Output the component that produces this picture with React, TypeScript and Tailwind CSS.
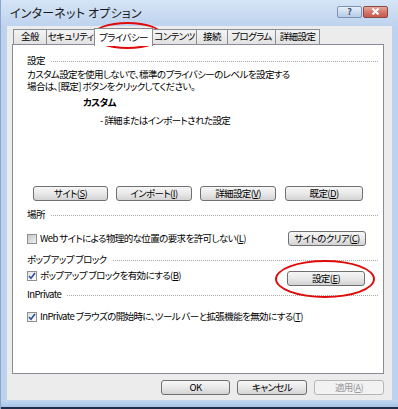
import React from 'react';

const font = "font-['Noto_Sans_CJK_JP','Liberation_Sans',sans-serif] [font-feature-settings:'palt']";
const txt = 'text-[9.5px] tracking-[-0.6px] leading-none';

function Btn({ children, w, disabled = false }: { children: React.ReactNode; w: string; disabled?: boolean }) {
  return (
    <div
      className={`${w} h-[15px] shrink-0 flex items-center justify-center rounded-[3px] border ${txt} ${
        disabled
          ? 'border-[#b4b8bb] bg-[#f2f2f2] text-[#9a9a9a]'
          : 'border-[#707070] bg-gradient-to-b from-[#f6f6f6] via-[#e9e9e9] to-[#d3d3d3] text-black'
      }`}
    >
      {children}
    </div>
  );
}

function Key({ k }: { k: string }) {
  return (
    <span>
      (<span className="underline underline-offset-1">{k}</span>)
    </span>
  );
}

function GroupHeader({ label }: { label: string }) {
  return (
    <div className={`h-[12px] flex items-center gap-[6px] ${txt}`}>
      <span>{label}</span>
      <div className="flex-1 border-t border-dotted border-[#a9a9a9]" />
    </div>
  );
}

function Checkbox({ checked }: { checked: boolean }) {
  return (
    <div
      className={`w-[10px] h-[10px] shrink-0 border border-[#8e8f8f] flex items-center justify-center ${
        checked ? 'bg-gradient-to-br from-[#e4e4e4] to-[#ffffff]' : 'bg-gradient-to-br from-[#c8c8c8] to-[#eeeeee]'
      }`}
    >
      {checked && (
        <svg width="8" height="8" viewBox="0 0 8 8">
          <path d="M1 4 L3 6.3 L7 1" stroke="#2b4fa3" strokeWidth="1.6" fill="none" />
        </svg>
      )}
    </div>
  );
}

const tabs = [
  { label: '全般', w: 'w-[34px]' },
  { label: 'セキュリティ', w: 'w-[49px]' },
  { label: 'プライバシー', w: 'w-[59px]', active: true },
  { label: 'コンテンツ', w: 'w-[45px]' },
  { label: '接続', w: 'w-[32px]' },
  { label: 'プログラム', w: 'w-[49px]' },
  { label: '詳細設定', w: 'w-[45px]' },
];

export default function App() {
  return (
    <div className={`relative w-[398px] h-[409px] overflow-hidden flex flex-col bg-[#bcd2ee] border-l border-[#8aa6cc] ${font} text-black`}>
      {/* Title bar */}
      <div className="h-[26px] shrink-0 flex items-center pl-[9px] pr-[10px] bg-gradient-to-b from-[#d6e5f6] to-[#bed3ee]">
        <span className="text-[12px] leading-none text-[#1a1a1a] tracking-[0.2px]">インターネット オプション</span>
        <div className="ml-auto flex items-center gap-[1px] -mt-[3px]">
          <div className="w-[25px] h-[12px] rounded-[2px] border border-[#7d93b6] bg-gradient-to-b from-[#e8f0fa] via-[#cddcf0] to-[#b5cbe8] flex items-center justify-center text-[9px] font-bold leading-none text-[#3a4a64]">
            ?
          </div>
          <div className="w-[25px] h-[12px] rounded-[2px] border border-[#8a4a44] bg-gradient-to-b from-[#e8a89b] via-[#d3776a] to-[#c85a4c] flex items-center justify-center">
            <svg width="9" height="7" viewBox="0 0 9 7">
              <path d="M1.5 0.5 L7.5 6.5 M7.5 0.5 L1.5 6.5" stroke="#ffffff" strokeWidth="2" />
            </svg>
          </div>
        </div>
      </div>

      {/* Client area */}
      <div className="mx-[6px] h-[374px] shrink-0 bg-[#ececec] pt-[2px] pl-[5px] pr-[8px] flex flex-col">
        {/* Tabs */}
        <div className="h-[16px] flex items-end pl-[1px] relative z-10">
          {tabs.map((t) =>
            t.active ? (
              <div
                key={t.label}
                className={`${t.w} h-[18px] -mb-[2px] -mr-px shrink-0 bg-white border border-b-0 border-[#898c95] flex items-center justify-center ${txt}`}
              >
                {t.label}
              </div>
            ) : (
              <div
                key={t.label}
                className={`${t.w} h-[15px] -mr-px shrink-0 border border-b-0 border-[#898c95] bg-gradient-to-b from-[#f4f4f4] to-[#e2e2e2] flex items-center justify-center whitespace-nowrap overflow-hidden ${txt}`}
              >
                {t.label}
              </div>
            )
          )}
        </div>

        {/* Panel */}
        <div className="h-[330px] bg-white border border-[#898c95] pl-[14px] pr-[5px] flex flex-col">
          <div className="mt-[10px]">
            <GroupHeader label="設定" />
          </div>
          <div className="mt-[1px] text-[9.5px] tracking-[-0.6px] leading-[12px]">
            <div>カスタム設定を使用しないで、標準のプライバシーのレベルを設定する</div>
            <div>場合は、[既定] ボタンをクリックしてください。</div>
          </div>
          <div className={`mt-[5px] h-[12px] pl-[56px] flex items-center font-bold ${txt}`}>カスタム</div>
          <div className={`mt-[6px] h-[12px] pl-[73px] flex items-center ${txt}`}>- 詳細またはインポートされた設定</div>

          <div className="mt-[59px] flex items-center pl-[6px]">
            <Btn w="w-[75px]">サイト<Key k="S" /></Btn>
            <div className="w-[8px]" />
            <Btn w="w-[76px]">インポート<Key k="I" /></Btn>
            <div className="w-[8px]" />
            <Btn w="w-[76px]">詳細設定<Key k="V" /></Btn>
            <div className="w-[9px]" />
            <Btn w="w-[78px]">既定<Key k="D" /></Btn>
          </div>

          <div className="mt-[8px]">
            <GroupHeader label="場所" />
          </div>
          <div className="mt-[10px] h-[15px] flex items-center">
            <Checkbox checked={false} />
            <span className={`ml-[3px] ${txt}`}>
              Web サイトによる物理的な位置の要求を許可しない<Key k="L" />
            </span>
            <div className="ml-auto mr-[12px]">
              <Btn w="w-[78px]">サイトのクリア<Key k="C" /></Btn>
            </div>
          </div>

          <div className="mt-[8px]">
            <GroupHeader label="ポップアップ ブロック" />
          </div>
          <div className="mt-[4px] h-[17px] flex items-start">
            <div className="h-[12px] flex items-center">
              <Checkbox checked={true} />
              <span className={`ml-[3px] ${txt}`}>
                ポップアップ ブロックを有効にする<Key k="B" />
              </span>
            </div>
            <div className="ml-auto mr-[13px] mt-[1px]">
              <Btn w="w-[78px]">設定<Key k="E" /></Btn>
            </div>
          </div>

          <div className="mt-[2px]">
            <GroupHeader label="InPrivate" />
          </div>
          <div className="mt-[10px] h-[12px] flex items-center">
            <Checkbox checked={true} />
            <span className={`ml-[3px] ${txt}`}>
              InPrivate ブラウズの開始時に、ツール バーと拡張機能を無効にする<Key k="T" />
            </span>
          </div>
        </div>

        {/* Bottom buttons */}
        <div className="mt-[6px] flex justify-end gap-[7px]">
          <Btn w="w-[69px]">OK</Btn>
          <Btn w="w-[70px]">キャンセル</Btn>
          <Btn w="w-[70px]" disabled>適用<Key k="A" /></Btn>
        </div>
      </div>

      <div className="flex-1 border-b-2 border-[#1d2d4a] bg-gradient-to-b from-[#c2d7f0] to-[#a9c3e6]" />

      {/* Red annotation ellipses */}
      <div className="absolute left-[91px] top-[22px] w-[71px] h-[27px] rounded-[50%] border-2 border-[#e10a0a]" />
      <div className="absolute left-[274px] top-[260px] w-[100px] h-[38px] rounded-[50%] border-2 border-[#e10a0a]" />
    </div>
  );
}
